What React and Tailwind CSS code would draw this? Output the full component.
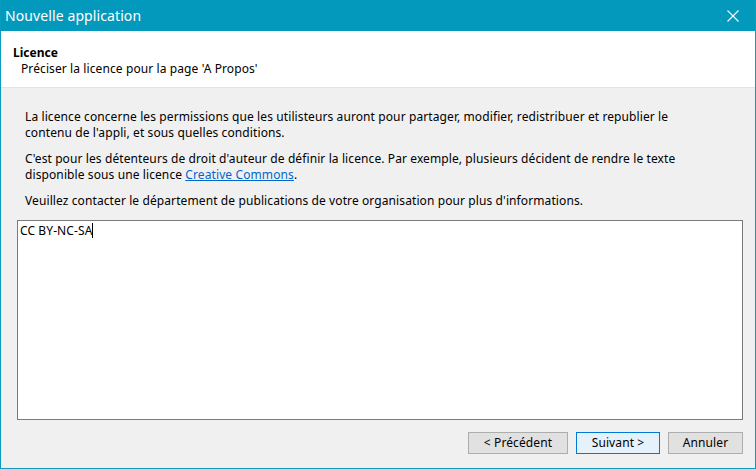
import React from 'react';

const font = { fontFamily: '"Noto Sans", "Liberation Sans", sans-serif' };

function WizardButton({ children, primary, width }) {
  return (
    <button
      className={
        primary
          ? 'h-[22px] border border-[#0078d7] bg-[#e5f1fb] text-[12px] text-black'
          : 'h-[22px] border border-[#adadad] bg-[#e1e1e1] text-[12px] text-black'
      }
      style={{ width }}
    >
      {children}
    </button>
  );
}

export default function App() {
  return (
    <div className="w-[756px] h-[469px] flex flex-col border-x border-b border-[#0a9cbf] bg-[#f0f0f0] overflow-hidden" style={font}>
      {/* Title bar */}
      <div className="h-[31px] -mx-px bg-[#0399bc] flex items-center justify-between pl-[5px] pr-[17px] shrink-0">
        <span className="text-[14px] tracking-[0.1px] text-white leading-none">Nouvelle application</span>
        <svg width="12" height="12" viewBox="0 0 12 12" className="mt-px">
          <path d="M0.5 0.5 L11.5 11.5 M11.5 0.5 L0.5 11.5" stroke="white" strokeWidth="1.1" />
        </svg>
      </div>

      {/* Header */}
      <div className="h-[57px] bg-white border-b border-[#e3e3e3] pt-[14px] pl-[12px] shrink-0 text-[12px] leading-[16px] text-black">
        <div className="font-bold">Licence</div>
        <div className="pl-[8px] tracking-[0.1px]">Préciser la licence pour la page 'A Propos'</div>
      </div>

      {/* Body */}
      <div className="flex-1 flex flex-col pt-[21px] text-[12px] leading-[16px] text-black tracking-[0.1px]">
        <div className="pl-[24px] pr-[50px] flex flex-col gap-[10px]">
          <p>
            La licence concerne les permissions que les utilisteurs auront pour partager, modifier, redistribuer et republier le
            contenu de l'appli, et sous quelles conditions.
          </p>
          <p>
            C'est pour les détenteurs de droit d'auteur de définir la licence. Par exemple, plusieurs décident de rendre le texte
            disponible sous une licence <span className="text-[#0066cc] underline">Creative Commons</span>.
          </p>
          <p>Veuillez contacter le département de publications de votre organisation pour plus d'informations.</p>
        </div>

        <div className="mt-[11px] ml-[16px] mr-[12px] h-[200px] bg-white border border-[#7a7a7a] px-[2px] pt-[2px]">
          <span>CC BY-NC-SA</span>
          <span className="inline-block w-px h-[15px] bg-black align-[-3px]" />
        </div>

        <div className="mt-[12px] mr-[12px] flex justify-end gap-[8px]">
          <WizardButton width={100}>&lt; Précédent</WizardButton>
          <WizardButton width={84} primary>Suivant &gt;</WizardButton>
          <WizardButton width={75}>Annuler</WizardButton>
        </div>
      </div>
    </div>
  );
}
